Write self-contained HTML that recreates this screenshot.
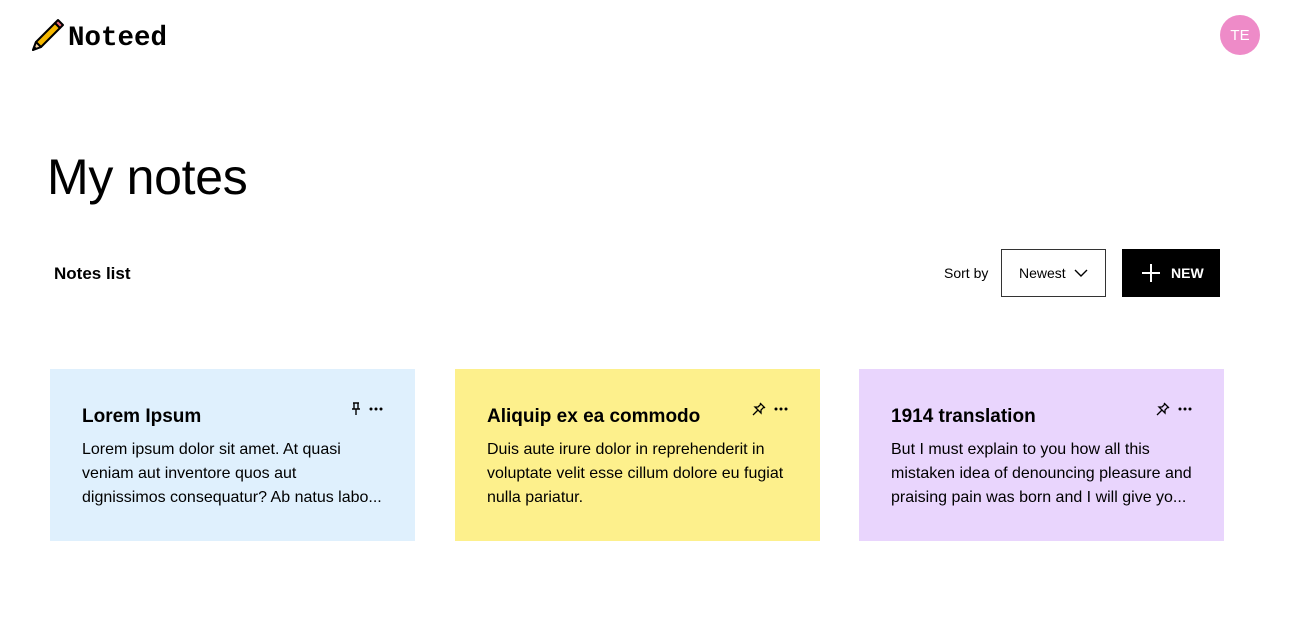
<!DOCTYPE html>
<html><head><meta charset="utf-8"><style>
*{margin:0;padding:0;box-sizing:border-box}
body{width:1292px;height:627px;background:#fff;font-family:"Liberation Sans",sans-serif;position:relative;overflow:hidden;color:#000}
.abs{position:absolute}
.logo{left:29px;top:18px;display:flex;align-items:center}
.logo span{font-family:"Liberation Mono",monospace;font-weight:bold;font-size:27.5px;margin-left:3px;margin-top:4px}
.av{left:1220px;top:15px;width:40px;height:40px;border-radius:50%;background:#ee8bc8;color:#fff;font-size:15px;display:flex;align-items:center;justify-content:center}
h1{position:absolute;left:47px;top:148px;font-size:50px;font-weight:normal;letter-spacing:-0.3px}
.nl{left:54px;top:264px;font-size:17px;font-weight:bold}
.sb{left:944px;top:265px;font-size:14px}
.sel{left:1001px;top:249px;width:105px;height:48px;border:1px solid #333;font-size:14px;display:flex;align-items:center;padding-left:17px}
.new{left:1122px;top:249px;width:98px;height:48px;background:#000;color:#fff;font-size:14px;font-weight:bold;display:flex;align-items:center;padding-left:20px}
.card{top:369px;width:365px;height:172px;padding:36px 32px}
.card h3{font-size:19px;font-weight:bold;margin-bottom:10px;margin-top:1px}
.card p{font-size:16px;line-height:24px}
.ic{position:absolute;top:33px;right:32px;display:flex;align-items:center;gap:8px}
</style></head><body>
<div class="abs logo">
<svg width="36" height="36" viewBox="0 0 36 36"><path d="M4 32 L7 24 L26 5 L31 10 L12 29 Z" fill="#f5b800" stroke="#000" stroke-width="2" stroke-linejoin="round"/><path d="M26 5 L29 2 L34 7 L31 10 Z" fill="#e86a7a" stroke="#000" stroke-width="2" stroke-linejoin="round"/><path d="M4 32 L7 24 L12 29 Z" fill="#f3d3a4" stroke="#000" stroke-width="2" stroke-linejoin="round"/><path d="M4 32 L5.5 28 L8 30.5Z" fill="#000"/></svg>
<span>Noteed</span></div>
<div class="abs av">TE</div>
<h1>My notes</h1>
<div class="abs nl">Notes list</div>
<div class="abs sb">Sort by</div>
<div class="abs sel">Newest <svg style="margin-left:8px" width="14" height="9" viewBox="0 0 14 9"><path d="M1 1l6 6 6-6" fill="none" stroke="#000" stroke-width="1.4"/></svg></div>
<div class="abs new"><svg width="18" height="18" viewBox="0 0 18 18"><path d="M9 0v18M0 9h18" stroke="#fff" stroke-width="2"/></svg><span style="margin-left:11px">NEW</span></div>

<div class="abs card" style="left:50px;background:#dff0fd">
<div class="ic"><svg width="10" height="14" viewBox="0 0 10 14"><path d="M2 1h6M3 1v6M7 1v6M1 7h8M5 7v6" stroke="#000" stroke-width="1.4" fill="none"/></svg><svg width="14" height="4"><circle cx="2" cy="2" r="1.5"/><circle cx="7" cy="2" r="1.5"/><circle cx="12" cy="2" r="1.5"/></svg></div>
<h3>Lorem Ipsum</h3><p>Lorem ipsum dolor sit amet. At quasi veniam aut inventore quos aut dignissimos consequatur? Ab natus labo...</p></div>

<div class="abs card" style="left:455px;background:#fdf08c">
<div class="ic"><svg width="14" height="14" viewBox="0 0 14 14"><path d="M8 1l5 5M9 2l-3 3-3 0 6 6 0-3 3-3M6 8l-5 5" stroke="#000" stroke-width="1.3" fill="none"/></svg><svg width="14" height="4"><circle cx="2" cy="2" r="1.5"/><circle cx="7" cy="2" r="1.5"/><circle cx="12" cy="2" r="1.5"/></svg></div>
<h3>Aliquip ex ea commodo</h3><p>Duis aute irure dolor in reprehenderit in voluptate velit esse cillum dolore eu fugiat nulla pariatur.</p></div>

<div class="abs card" style="left:859px;background:#e9d5fd">
<div class="ic"><svg width="14" height="14" viewBox="0 0 14 14"><path d="M8 1l5 5M9 2l-3 3-3 0 6 6 0-3 3-3M6 8l-5 5" stroke="#000" stroke-width="1.3" fill="none"/></svg><svg width="14" height="4"><circle cx="2" cy="2" r="1.5"/><circle cx="7" cy="2" r="1.5"/><circle cx="12" cy="2" r="1.5"/></svg></div>
<h3>1914 translation</h3><p>But I must explain to you how all this mistaken idea of denouncing pleasure and praising pain was born and I will give yo...</p></div>
</body></html>
